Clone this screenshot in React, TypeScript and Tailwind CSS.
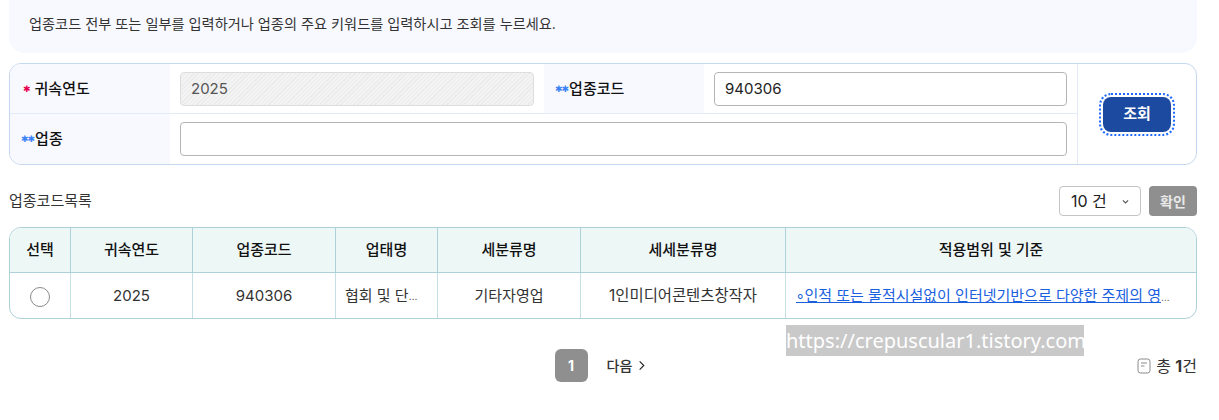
const FONT = "font-['Inter','Noto_Sans_CJK_KR',sans-serif]";

const HEADERS = ["선택", "귀속연도", "업종코드", "업태명", "세분류명", "세세분류명", "적용범위 및 기준"];

function Mark({ color, count }: { color: string; count: number }) {
  return (
    <span className={`font-['DejaVu_Sans',sans-serif] text-[9px] leading-none tracking-[-1px] mr-[1px] ${color}`}>
      {"✱".repeat(count)}
    </span>
  );
}

export default function App() {
  return (
    <div className={`${FONT} relative w-[1219px] h-[420px] overflow-hidden bg-white text-[#222] pl-[9px] pr-[22px]`}>
      <div className="h-[53px] rounded-b-2xl bg-[#f7f9ff] flex items-center pl-[20px] pb-[5px] text-[14.2px] text-[#333]">
        업종코드 전부 또는 일부를 입력하거나 업종의 주요 키워드를 입력하시고 조회를 누르세요.
      </div>

      <div className="mt-[10px] h-[102px] rounded-xl border border-[#c5d6ef] overflow-hidden grid grid-cols-[160px_374px_160px_373px_1fr] grid-rows-[50px_50px]">
        <div className="bg-[#f7f9ff] border-b border-[#e3ebf8] flex items-center pl-[13px] pt-[1px] text-[15px] font-medium text-[#111]">
          <Mark color="text-[#e6004c]" count={1} />
          <span className="ml-[4px]">귀속연도</span>
        </div>
        <div className="border-b border-[#e3ebf8] flex items-center px-[10px]">
          <div className="w-full h-[34px] rounded border border-[#dddddd] flex items-center pl-[10px] pt-[1px] text-[15px] text-[#555] bg-[repeating-linear-gradient(135deg,#ebebeb_0px,#ebebeb_1px,#f3f3f3_1px,#f3f3f3_3px)]">
            2025
          </div>
        </div>
        <div className="bg-[#f7f9ff] border-b border-[#e3ebf8] flex items-center pl-[11px] pt-[1px] text-[15px] font-medium text-[#111]">
          <Mark color="text-[#3b82f6]" count={2} />업종코드
        </div>
        <div className="border-b border-[#e3ebf8] flex items-center px-[10px]">
          <input
            readOnly
            value="940306"
            className="w-full h-[34px] rounded border border-[#b5b5b5] pl-[10px] text-[15px] text-[#222] outline-none"
          />
        </div>
        <div className="row-span-2 border-l border-[#e3ebf8] flex items-center justify-center">
          <button
            type="button"
            className="w-[68px] h-[35px] rounded-lg bg-[#1b4aa0] text-white text-[15px] font-bold outline-2 outline-dotted outline-offset-2 outline-[#1f6bff]"
          >
            조회
          </button>
        </div>

        <div className="bg-[#f7f9ff] flex items-center pl-[11px] text-[15px] font-medium text-[#111]">
          <Mark color="text-[#3b82f6]" count={2} />업종
        </div>
        <div className="col-span-3 flex items-center px-[10px]">
          <input readOnly className="w-full h-[34px] rounded border border-[#b5b5b5] outline-none" />
        </div>
      </div>

      <div className="mt-[21px] h-[30px] flex items-center justify-between">
        <h2 className="text-[15px] text-[#333] font-normal">업종코드목록</h2>
        <div className="flex items-center gap-[8px]">
          <div className="w-[82px] h-[30px] rounded border border-[#c4c4c4] flex items-center justify-between pl-[11px] pr-[10px] text-[16px]">
            10 건
            <svg width="9" height="9" viewBox="0 0 24 24" fill="none" stroke="#555" strokeWidth="3">
              <path d="M5 9l7 7 7-7" />
            </svg>
          </div>
          <button type="button" className="w-[48px] h-[30px] rounded bg-[#8f8f8f] text-[#e8e8e8] text-[14px] font-bold">
            확인
          </button>
        </div>
      </div>

      <div className="mt-[11px] h-[92px] rounded-xl border border-[#aed0d8] overflow-hidden grid grid-cols-[61px_122px_143px_102px_143px_205px_minmax(0,1fr)] grid-rows-[45px_45px]">
        {HEADERS.map((h, i) => (
          <div
            key={h}
            className={`bg-[#edf7f6] border-b border-[#aed0d8] flex items-center justify-center text-[15px] font-medium text-[#111] ${i < 6 ? "border-r" : ""}`}
          >
            {h}
          </div>
        ))}
        <div className="border-r border-[#c5e0e5] flex items-center justify-center pt-[2px]">
          <span className="w-[20px] h-[20px] rounded-full border border-[#8a8a8a]" />
        </div>
        <div className="border-r border-[#c5e0e5] flex items-center justify-center pt-[1px] text-[15px] text-[#333]">2025</div>
        <div className="border-r border-[#c5e0e5] flex items-center justify-center pt-[1px] text-[15px] text-[#333]">940306</div>
        <div className="border-r border-[#c5e0e5] flex items-center pl-[9px] pt-[1px] text-[15px] text-[#333]">
          협회 및 단<span className="text-[10px]">…</span>
        </div>
        <div className="border-r border-[#c5e0e5] flex items-center justify-center pt-[1px] text-[15px] text-[#333]">기타자영업</div>
        <div className="border-r border-[#c5e0e5] flex items-center justify-center pt-[1px] text-[15.4px] text-[#333]">1인미디어콘텐츠창작자</div>
        <div className="flex items-center pl-[10px] pr-[22px] pt-[1px] text-[10px] text-[#555] min-w-0">
          <div className="truncate">
            <a href="#" className="text-[15px] text-[#1a5fe0] underline">
              ◦인적 또는 물적시설없이 인터넷기반으로 다양한 주제의 영상콘텐츠를 제작하는 경우
            </a>
          </div>
        </div>
      </div>

      <div className="relative mt-[30px] h-[33px] flex items-center justify-center">
        <div className="flex items-center ml-[-4px]">
          <span className="w-[33px] h-[33px] rounded-md bg-[#8f8f8f] text-white text-[14px] font-bold flex items-center justify-center">1</span>
          <span className="ml-[19px] text-[14px] text-[#333] font-medium">다음</span>
          <svg className="ml-[4px]" width="11" height="11" viewBox="0 0 24 24" fill="none" stroke="#222" strokeWidth="2.4">
            <path d="M8 3l9 9-9 9" />
          </svg>
        </div>
        <div className="absolute right-0 top-0 h-full flex items-center text-[16px] text-[#333]">
          <svg width="14" height="16" viewBox="0 0 14 16" fill="none" stroke="#8a8a8a" strokeWidth="1" className="mr-[5px]">
            <rect x="1" y="1" width="12" height="14" rx="2.5" />
            <path d="M4 5h6M4 8h3.5" />
          </svg>
          총&nbsp;<b className="font-bold">1</b>건
        </div>
      </div>

      <div className="absolute left-[786px] top-[325px] w-[298px] h-[31px] bg-[#c9c9c9] text-white text-[20px] leading-[31px] font-['Noto_Sans',sans-serif] whitespace-nowrap">
        https://crepuscular1.tistory.com
      </div>
    </div>
  );
}
